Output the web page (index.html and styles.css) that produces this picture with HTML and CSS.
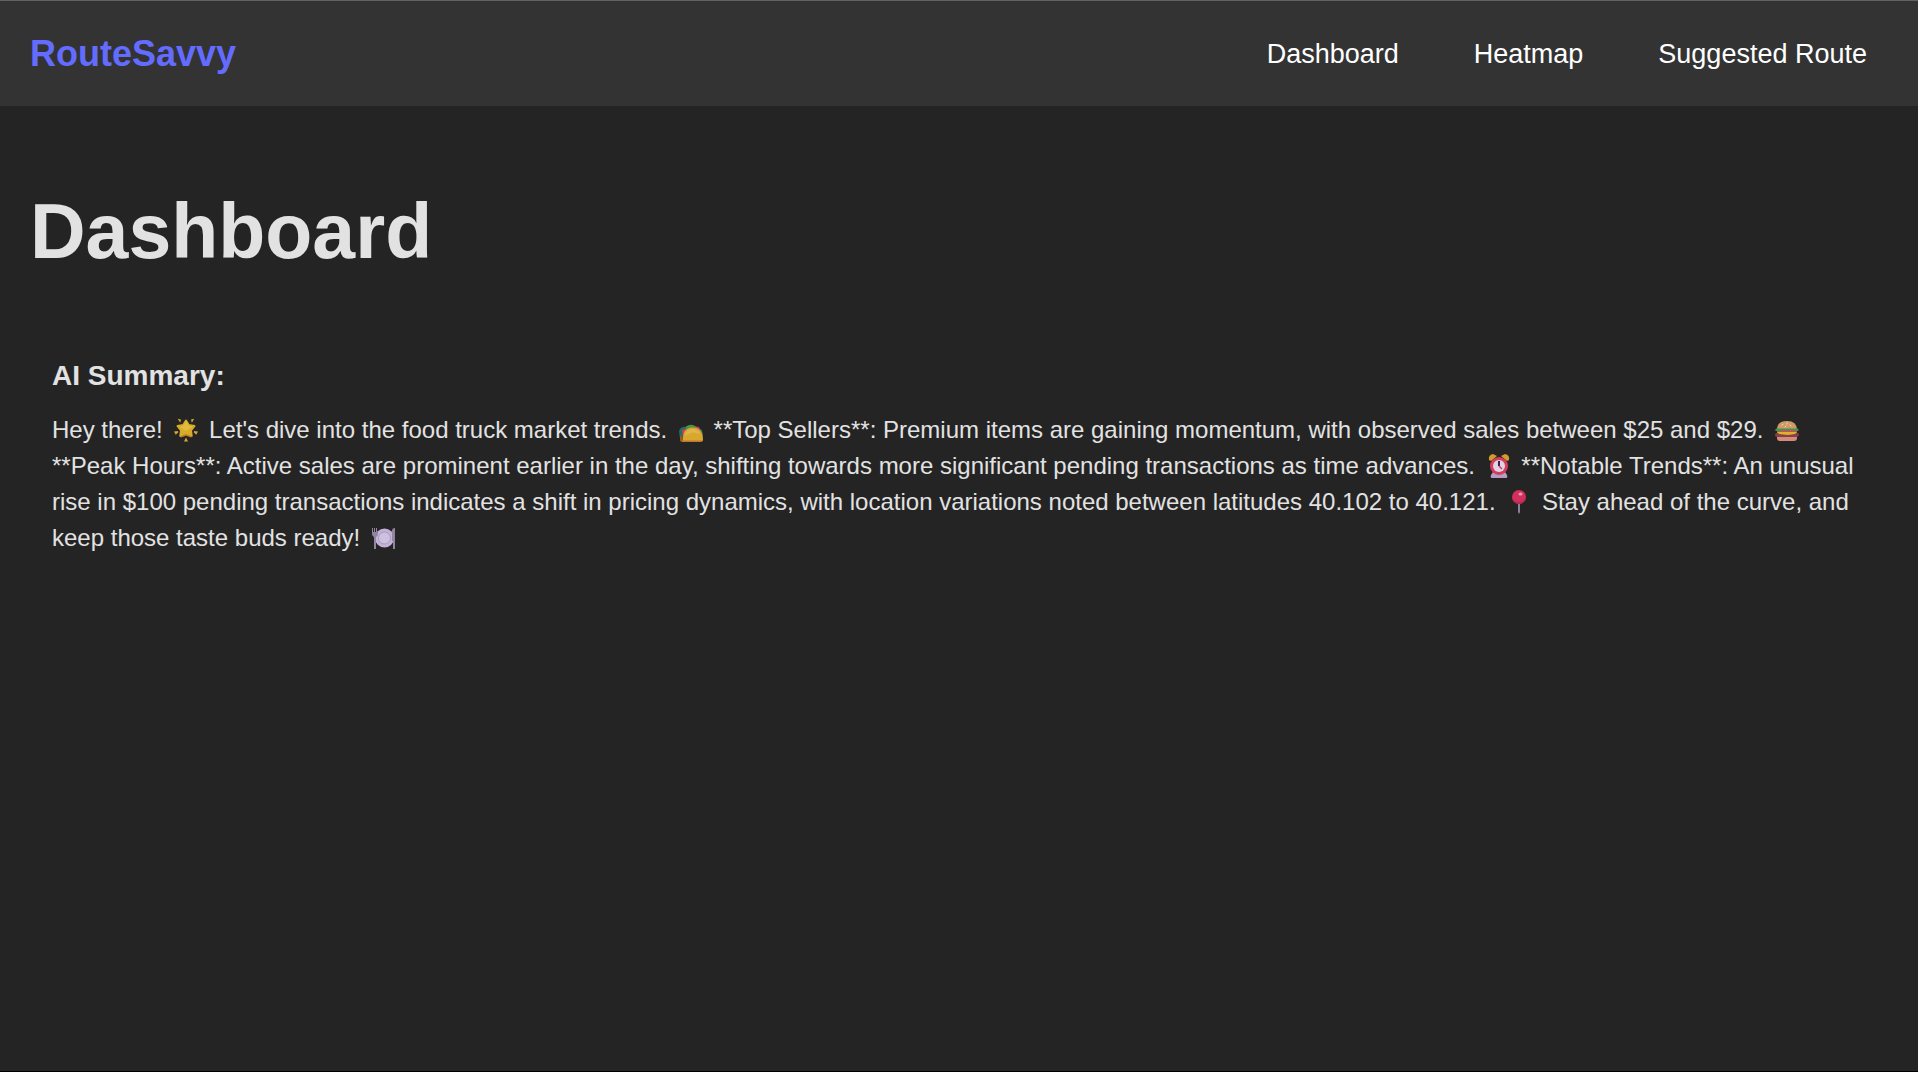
FILE: index.html
```html
<!DOCTYPE html>
<html lang="en">
<head>
	<meta charset="UTF-8">
	<meta name="viewport" content="width=device-width, initial-scale=1.0">
	<title>RouteSavvy</title>
	<link rel="stylesheet" href="styles.css">
</head>
<body>
	<header class="navbar">
		<div class="logo">RouteSavvy</div>
		<nav>
			<ul class="nav-links">
				<li><a href="#dashboard">Dashboard</a></li>
				<li><a href="#heatmap">Heatmap</a></li>
				<li><a href="#route">Suggested Route</a></li>
			</ul>
		</nav>
	</header>
	<main class="container" id="dashboard">
		<h1>Dashboard</h1>
		<section class="summary">
			<h2>AI Summary:</h2>
			<p>
				Hey there!
				<!-- star -->
				<svg class="emoji" viewBox="0 0 24 24" aria-hidden="true">
					<path fill="#d6a62b" d="M3.700.700 7 1.600 6.200 4.800ZM20.300.700 17 1.600 17.800 4.800ZM0 13.500 4 13 4.200 14.500 1.700 16.700ZM24 13.500 20 13 19.800 14.500 22.300 16.700ZM12 19.500 14 23.500 10 23.500Z"/>
					<path fill="#d8ab2d" stroke="#d8ab2d" stroke-width="2" stroke-linejoin="round" d="M12 2.500 14.800 7 20.500 8 17 12.500 17.700 18 12 16 6.300 18 7 12.500 3.500 8 9.200 7Z"/>
					<path fill="#e2bd3c" d="M12 3 14.300 7.300 18.500 8.500 12 13 6 9 9.800 7.300Z"/>
					<path fill="#b67d24" d="M6 18.500 12 16 18 18.500 17 19.500 12 17.700 7 19.500Z"/>
				</svg>
				Let's dive into the food truck market trends.
				<!-- taco -->
				<svg class="emoji" viewBox="0 0 24 24" aria-hidden="true">
					<path fill="#246b61" d="M0 13Q2 8 7 9L11 7 18 9 23 12 24 16 20 22H2Q0 18 0 13Z"/>
					<path fill="#4c9148" d="M6 10Q9 6 14 7L20 10 23 14 20 18Z"/>
					<path fill="#d53e5f" d="M3 12 7 11 8 15 4 19ZM16 8.500 20 9 21 12 17 12Z"/>
					<path fill="#99591f" d="M1 17 4 20V23.500H2Q1 23.500 1 22Z"/>
					<path fill="#d9a72e" d="M4 23.500Q3 9.500 13.500 9.500T24 22Q24 23.500 22 23.500Z"/>
					<path fill="#e0b64b" d="M6 18Q7 11 13 11T21 16Q13 12 6 18Z"/>
					<path fill="#be772e" d="M2 22.500H23.500L22 24H3Z"/>
				</svg>
				**Top Sellers**: Premium items are gaining momentum, with observed sales between $25 and $29.
				<!-- burger -->
				<svg class="emoji" viewBox="0 0 24 24" aria-hidden="true">
					<path fill="#d09a68" d="M2 12Q2 3 12 3T22 12Z"/>
					<path fill="#844149" d="M0 16.500Q0 15 2 15H22Q24 15 24 16.500T22 19H2Q0 19 0 16.500Z"/>
					<path fill="#d3495c" d="M2 12H22V15H2Z"/>
					<path fill="#e2ae2c" d="M2 14H22L20 16 13 17 4 16Z"/>
					<path fill="#459448" d="M1 10.500H23Q24 12 23 13H19L16 12 12 13 8 12 4 14 0 12.500Z"/>
					<path fill="#d58b79" d="M2 19H22V20Q22 23 19 23H5Q2 23 2 20Z"/>
					<path stroke="#f4d8b5" stroke-linecap="round" d="M8 6.500 7 7M12 5 12 6M15 7 16 8M11 8 10 9"/>
				</svg>
				**Peak Hours**: Active sales are prominent earlier in the day, shifting towards more significant pending transactions as time advances.
				<!-- alarm clock -->
				<svg class="emoji" viewBox="0 0 24 24" aria-hidden="true">
					<path fill="#d39b29" d="M2 6Q1 1 6 0L10 2 4 7ZM22 6Q23 1 18 0L14 2 20 7Z"/>
					<path fill="#b69cc2" d="M6 18 4 21Q3 24 5 24H19Q21 24 20 21L18 18Z"/>
					<circle cx="12" cy="12" r="9" fill="#d63c5e"/>
					<circle cx="12" cy="12" r="6" fill="#ded4e5"/>
					<path fill="none" stroke="#31263f" stroke-width="2" d="M12 7V12"/>
					<path fill="none" stroke="#d63c5e" stroke-width="1.500" d="M12 12 15 15"/>
				</svg>
				**Notable Trends**: An unusual rise in $100 pending transactions indicates a shift in pricing dynamics, with location variations noted between latitudes 40.102 to 40.121.
				<!-- pin -->
				<svg class="emoji" viewBox="0 0 24 24" aria-hidden="true">
					<path fill="#8d8295" d="M11 12H13V22L12 24 11 22Z"/>
					<circle cx="12" cy="7" r="7" fill="#d22f5d"/>
					<path fill="#b02955" d="M5 8Q7 14 12 14T19 7Q17 12 12 12T5 8Z"/>
					<ellipse cx="13.500" cy="4" rx="2" ry="1.500" fill="#ee9aae"/>
				</svg>
				Stay ahead of the curve, and keep those taste buds ready!
				<!-- plate -->
				<svg class="emoji" viewBox="0 0 24 24" aria-hidden="true">
					<circle cx="12.500" cy="12" r="9.500" fill="#c3b1d8"/>
					<circle cx="12.500" cy="12" r="6" fill="#cec0df" stroke="#ab9abd"/>
					<path fill="#9184a0" d="M0 2H1V6H2V2H3V6H4V2H5V6H6V8Q6 10 4 11V23H2V11Q0 10 0 8ZM20 5Q20 2 23 2V23H21V15H20Z"/>
				</svg>
			</p>
		</section>
	</main>
</body>
</html>
```
FILE: styles.css
```css
*{
	box-sizing: border-box;
	margin: 0;
	padding: 0;
}

body {
	min-height: 100vh;
	background: #242424;
	border-top: 1px solid #5f6368;
	border-bottom: 1px solid #000;
	color: #e2e2e2;
	font-family: "Liberation Sans", Arial, sans-serif;
	font-size: 24px;
	line-height: 36px;
}

.navbar {
	display: flex;
	justify-content: space-between;
	align-items: center;
	padding: 24px 30px;
	background: #333;
}

.logo {
	color: #646cff;
	font-size: 36px;
	font-weight: bold;
	line-height: 57px;
}

.nav-links {
	display: flex;
	gap: 75px;
	padding: 2px 21px 0 0;
	list-style: none;
}

.nav-links a {
	color: #fff;
	font-size: 27px;
	text-decoration: none;
}

.container {
	padding: 83px 30px;
}

h1 {
	font-size: 77px;
	line-height: 85px;
}

.summary {
	padding: 84px 22px 0;
}

.summary h2 {
	margin-bottom: 18px;
	font-size: 28px;
}

.emoji {
	width: 24px;
	height: 24px;
	margin: 0 4px 0 5px;
	vertical-align: -4px;
}
```
